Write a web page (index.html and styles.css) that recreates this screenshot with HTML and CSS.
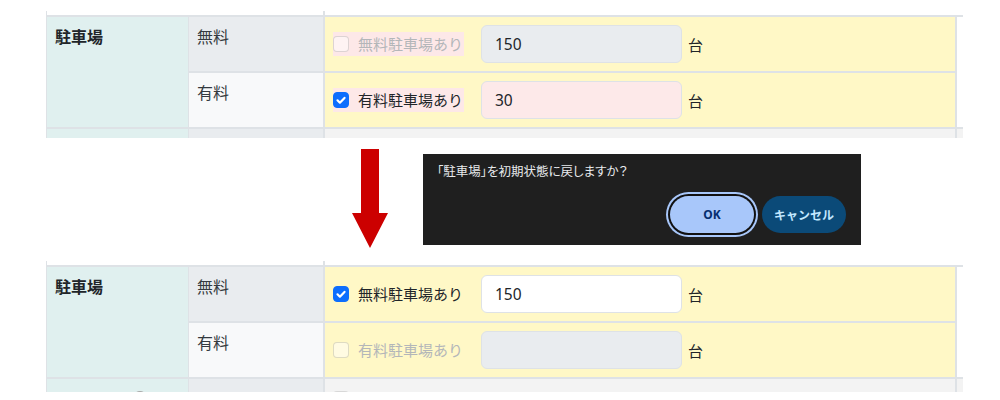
FILE: index.html
```html
<!DOCTYPE html>
<html lang="ja">
<head>
<meta charset="utf-8">
<title>駐車場 リセット</title>
<link rel="stylesheet" href="styles.css">
</head>
<body>
<section class="shot">
  <div class="stub"><span></span></div>
  <div class="grid">
    <div class="cell c1 span2">駐車場</div>
    <div class="cell c2 dark">無料</div>
    <div class="cell c3">
      <div class="check-col">
        <span class="check changed disabled"><span class="box"></span><span class="lbl">無料駐車場あり</span></span>
      </div>
      <input class="num off" type="text" value="150" disabled>
      <span class="unit">台</span>
    </div>
    <div class="cell c4 span2"></div>
    <div class="cell c2 light">有料</div>
    <div class="cell c3">
      <div class="check-col">
        <span class="check changed checked"><span class="box"><svg viewBox="0 0 16 16" width="16" height="16"><path d="M4.5 8.3l2.4 2.4 4.6-4.8" fill="none" stroke="#fff" stroke-width="2.2" stroke-linecap="round" stroke-linejoin="round"/></svg></span><span class="lbl">有料駐車場あり</span></span>
      </div>
      <input class="num pink" type="text" value="30">
      <span class="unit">台</span>
    </div>
    <div class="cell c1 r3"><span class="info"></span></div>
    <div class="cell c2 dark r3"></div>
    <div class="cell c3 gray r3"><span class="box ghost"></span></div>
    <div class="cell c4 gray r3"></div>
  </div>
</section>

<section class="middle">
  <svg class="arrow" viewBox="0 0 36 99" width="36" height="99"><polygon points="9,0 27,0 27,64 36,64 18,99 0,64 9,64" fill="#cc0000"/></svg>
  <div class="dialog">
    <p class="msg">「駐車場」を初期状態に戻しますか？</p>
    <div class="actions">
      <button class="btn ok">OK</button>
      <button class="btn cancel">キャンセル</button>
    </div>
  </div>
</section>

<section class="shot after">
  <div class="stub"><span></span></div>
  <div class="grid">
    <div class="cell c1 span2">駐車場</div>
    <div class="cell c2 dark">無料</div>
    <div class="cell c3">
      <div class="check-col">
        <span class="check checked"><span class="box"><svg viewBox="0 0 16 16" width="16" height="16"><path d="M4.5 8.3l2.4 2.4 4.6-4.8" fill="none" stroke="#fff" stroke-width="2.2" stroke-linecap="round" stroke-linejoin="round"/></svg></span><span class="lbl">無料駐車場あり</span></span>
      </div>
      <input class="num" type="text" value="150">
      <span class="unit">台</span>
    </div>
    <div class="cell c4 span2"></div>
    <div class="cell c2 light">有料</div>
    <div class="cell c3">
      <div class="check-col">
        <span class="check disabled"><span class="box"></span><span class="lbl">有料駐車場あり</span></span>
      </div>
      <input class="num off" type="text" value="" disabled>
      <span class="unit">台</span>
    </div>
    <div class="cell c1 r3"><span class="info"></span></div>
    <div class="cell c2 dark r3"></div>
    <div class="cell c3 gray r3"><span class="box ghost"></span></div>
    <div class="cell c4 gray r3"></div>
  </div>
</section>
</body>
</html>
```

FILE: styles.css
```css
* { box-sizing: border-box; }

body {
  margin: 0;
  width: 1000px;
  height: 400px;
  overflow: hidden;
  background: #fff;
  color: #212529;
  font-family: "Noto Sans", "Noto Sans CJK JP", sans-serif;
}

.shot {
  height: 138px;
  overflow: hidden;
  padding: 11px 0 0 46px;
}
.shot.after { height: 142px; }

.stub {
  height: 4px;
  display: flex;
  border-left: 1px solid #dee2e6;
}
.stub span {
  margin-left: 276px;
  width: 2px;
  background: #dee2e6;
}

.grid {
  display: grid;
  width: 917px;
  grid-template-columns: 142px 136px 632px 6px;
  grid-auto-rows: 56px;
  border-top: 2px solid #dee2e6;
  border-left: 1px solid #dee2e6;
}

.cell { border-bottom: 2px solid #dee2e6; }

.c1 {
  grid-column: 1;
  background: #e0f0ef;
  border-right: 1px solid #dee2e6;
  padding: 8px;
  font-size: 16px;
  line-height: 24px;
  font-weight: 700;
}
.span2 { grid-row: span 2; }

.c2 {
  grid-column: 2;
  border-right: 2px solid #dee2e6;
  padding: 8px;
  font-size: 16px;
  line-height: 24px;
  color: #343a40;
}
.c2.dark { background: #e9ecef; }
.c2.light { background: #f8f9fa; }

.c3 {
  grid-column: 3;
  background: #fff8c6;
  border-right: 2px solid #dee2e6;
  display: flex;
  align-items: center;
  padding: 0 8px;
}
.c4 { grid-column: 4; }
.gray { background: #f3f3f3; }

.r3 { align-items: flex-start; }
.c3.r3 { padding-top: 12px; }

.check-col { width: 148px; flex: none; }

.check {
  display: inline-flex;
  align-items: center;
  height: 24px;
  padding-right: 1px;
  font-size: 15px;
  line-height: 24px;
}
.check.changed { background: #fde8e8; }

.box {
  display: inline-flex;
  width: 16px;
  height: 16px;
  flex: none;
  border-radius: 4px;
  border: 1px solid rgba(0, 0, 0, 0.25);
  background: #fff;
}
.checked .box {
  background: #0d6efd;
  border-color: #0d6efd;
}
.checked .box svg { margin: -1px; }
.disabled .box { opacity: 0.5; }
.box.ghost { opacity: 0.5; }

.lbl { margin-left: 9px; }
.disabled .lbl { color: #b3b6b9; }

.num {
  width: 201px;
  height: 38px;
  flex: none;
  border: 1px solid #dee2e6;
  border-radius: 6px;
  padding: 0 13px;
  font: 15.5px "Noto Sans", "Noto Sans CJK JP", sans-serif;
  color: #212529;
  -webkit-text-fill-color: #212529;
  background: #fff;
  outline: none;
}
.num.off { background: #e9ecef; }
.num.pink { background: #fde9e9; }

.unit {
  margin-left: 6px;
  font-size: 15px;
}

.info {
  display: block;
  width: 14px;
  height: 14px;
  margin: 4px 0 0 78px;
  border-radius: 50%;
  border: 2px solid #a8a8a8;
}

.middle {
  height: 112px;
  display: flex;
  align-items: flex-start;
  padding-left: 352px;
}
.arrow { margin-top: 11px; flex: none; }

.dialog {
  margin: 16px 0 0 35px;
  width: 438px;
  height: 91px;
  background: #1f1f1f;
  padding: 8px 15px 12px 14px;
  display: flex;
  flex-direction: column;
  justify-content: space-between;
}
.msg {
  margin: 0;
  font-family: "Noto Sans CJK JP", sans-serif;
  font-feature-settings: "palt";
  font-size: 12.5px;
  line-height: 18px;
  color: #e8eaed;
}
.actions {
  display: flex;
  justify-content: flex-end;
  gap: 8px;
}
.btn {
  width: 84px;
  height: 37px;
  border: none;
  border-radius: 19px;
  font-family: "Noto Sans", "Noto Sans CJK JP", sans-serif;
  font-size: 12px;
  font-weight: 700;
  padding: 0;
}
.btn.ok {
  background: #a8c7fa;
  color: #062e6f;
  box-shadow: 0 0 0 2px #111, 0 0 0 4px #a8c7fa;
}
.btn.cancel {
  background: #0b4a78;
  color: #c2e7ff;
}
```
